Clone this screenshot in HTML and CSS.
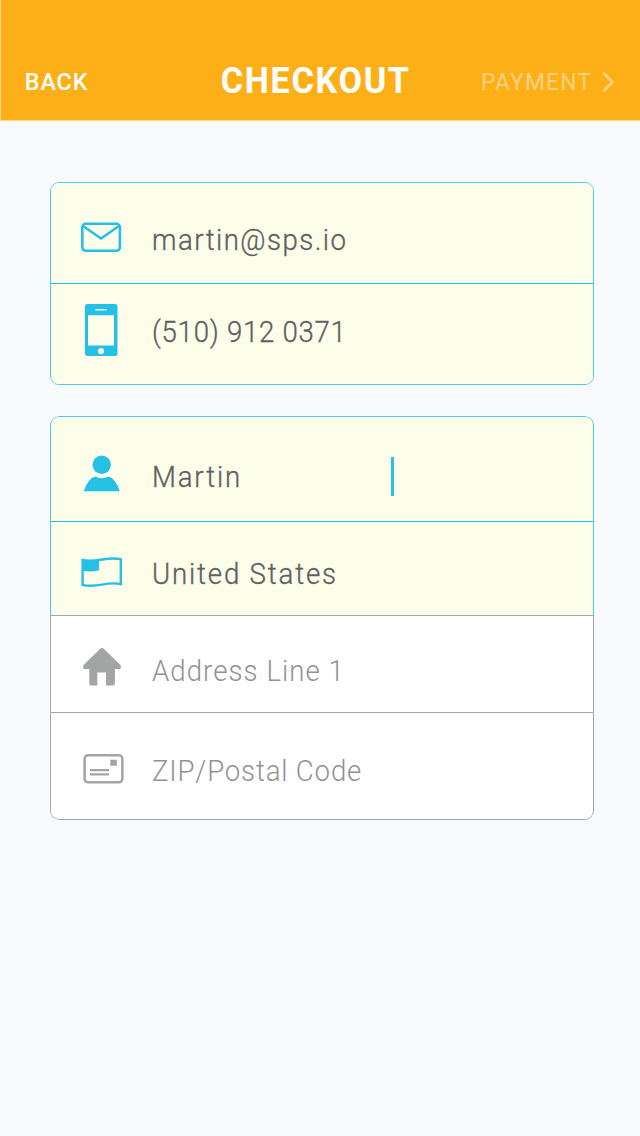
FILE: index.html
```html
<!DOCTYPE html>
<html lang="en">
<head>
<meta charset="utf-8">
<title>Checkout</title>
<link rel="stylesheet" href="styles.css">
</head>
<body>
<header class="bar">
  <a class="back">BACK</a>
  <h1 class="title">CHECKOUT</h1>
  <a class="next"><span class="next-label">PAYMENT</span>
    <svg class="chevron" width="14" height="22" viewBox="0 0 14 22"><path d="M2 2.5 10.500 11 2 19.500" fill="none" stroke="currentColor" stroke-width="2.6" stroke-linecap="round" stroke-linejoin="round"/></svg>
  </a>
</header>
<main class="form">
  <section class="card contact">
    <div class="row filled email">
      <svg class="icon" width="44" height="54" viewBox="0 0 44 54"><g fill="none" stroke="currentColor" stroke-width="2.6" stroke-linejoin="round"><rect x="2.300" y="13.800" width="37.600" height="27" rx="3.500"/><path d="M3 16 21 28.500 39 16"/></g></svg>
      <span class="value">martin@sps.io</span>
    </div>
    <div class="row filled phone">
      <svg class="icon" width="44" height="54" viewBox="0 0 44 54"><path fill="currentColor" fill-rule="evenodd" d="M7.500 1h27.500a2.500 2.500 0 0 1 2.500 2.500v47a2.500 2.500 0 0 1-2.500 2.500H7.500a2.500 2.500 0 0 1-2.500-2.500v-47A2.500 2.500 0 0 1 7.500 1zM8 12.300v30.200h26V12.300zM15.500 6v1.400h11V6zM21 45a3.100 3.100 0 1 0 .01 0z"/></svg>
      <span class="value">(510) 912 0371</span>
    </div>
  </section>
  <section class="card address">
    <div class="row filled name">
      <svg class="icon" width="44" height="54" viewBox="0 0 44 54"><g fill="currentColor"><circle cx="21.700" cy="17.800" r="9.200"/><path d="M15 29.500Q21.700 33 28.500 29.500Q36 32 39.800 44.300H3.800Q7.500 32 15 29.500z"/></g></svg>
      <span class="value">Martin</span>
      <span class="caret"></span>
    </div>
    <div class="row filled country">
      <svg class="icon" width="44" height="54" viewBox="0 0 44 54"><path d="M2.600 15C15 18.500 26 11 40.800 14.200V39C27 36 16 43.500 2.600 39.800z" fill="none" stroke="currentColor" stroke-width="2.400"/><path d="M2 14.500C8 16.500 13 15.500 19 14.300V24Q19 25.500 17.500 25.700C12 26.800 7 26.500 2 25.500z" fill="currentColor"/></svg>
      <span class="value">United States</span>
    </div>
    <div class="row empty line1">
      <svg class="icon" width="44" height="54" viewBox="0 0 44 54"><path fill="currentColor" d="M20.500 8.500Q22 7.500 23.500 8.500L40 24.500Q42 27 40 29H34.900V43.500Q34.900 45.500 33 45.500H26V32.500H17.300V45.500H11.200Q9.300 45.500 9.300 43.500V29H4.200Q2 27 4 24.500z"/></svg>
      <span class="value">Address Line 1</span>
    </div>
    <div class="row empty zip">
      <svg class="icon" width="46" height="54" viewBox="0 0 46 54"><rect x="4.600" y="13.300" width="37.800" height="27" rx="3.500" fill="none" stroke="currentColor" stroke-width="2.500"/><path fill="currentColor" d="M30.300 17.700h6.500v6h-6.500zM10 27h19v2.300H10zM10 31.200h19v2.400H10z"/></svg>
      <span class="value">ZIP/Postal Code</span>
    </div>
  </section>
</main>
</body>
</html>
```
FILE: styles.css
```css
* { box-sizing: border-box; }
body { margin: 0; min-height: 1136px; background: #f9fafc; font-family: Roboto, "Liberation Sans", sans-serif; }
.bar { display: grid; grid-template-columns: 196px 1fr 159px; height: 121px; background: #fdaf17; border-left: 1px solid #fed68b; border-bottom: 1px solid #fed68b; color: #fff; }
.back, .next-label, .title, .value { transform-origin: left center; }
.back, .next-label { font-size: 24.500px; line-height: 30px; font-weight: 500; }
.back { padding: 67px 0 0 25px; letter-spacing: 1px; transform: scaleX(0.95); }
.title { margin: 0; padding: 61px 0 0 25px; font-size: 36px; line-height: 40px; font-weight: 700; letter-spacing: 1.750px; white-space: nowrap; transform: scaleX(0.95); }
.next { display: flex; align-items: flex-start; padding-top: 67px; color: #fed184; }
.next-label { width: 121px; flex: none; font-weight: 400; letter-spacing: 1.300px; transform: scaleX(0.93); }
.chevron { margin-top: 4px; flex: none; }
.form { display: flex; flex-direction: column; gap: 31px; padding: 61px 46px 0 50px; }
.card { border: 1px solid #48cce8; border-radius: 9px; overflow: hidden; }
.address { border: 0; }
.row { display: flex; align-items: flex-start; padding-left: 29px; }
.address .row { border-left: 1px solid #48cce8; border-right: 1px solid #48cce8; }
.filled { background: #fdfeea; color: #24c0e6; }
.empty { background: #fff; color: #a3a5a4; }
.icon { flex: none; display: block; }
.value { margin-left: 28px; width: 239px; flex: none; font-size: 30px; line-height: 30px; font-weight: 300; -webkit-text-stroke: 0.35px #5f6062; white-space: nowrap; color: #5f6062; transform: scaleX(0.92); }
.empty .value { color: #929292; -webkit-text-stroke: 0; }
.email { height: 101px; border-bottom: 1px solid #24c0e6; padding-top: 27px; }
.email .value { margin-top: 15px; letter-spacing: 1.600px; }
.phone { height: 100px; padding-top: 19px; }
.phone .value { margin-top: 14px; letter-spacing: 0.800px; }
.address .name { height: 106px; border-top: 1px solid #48cce8; border-bottom: 1px solid #24c0e6; border-radius: 9px 9px 0 0; padding-top: 30px; }
.name .value { margin-top: 15px; letter-spacing: 2px; }
.caret { width: 3px; height: 39px; margin-top: 10px; background: #24c0e6; }
.country { height: 93px; padding-top: 23px; }
.country .value { margin-top: 14px; letter-spacing: 2px; }
.address .empty { border-color: #a3a5a6; border-top: 1px solid #a3a5a6; }
.line1 { height: 97px; padding-top: 24px; }
.line1 .value { margin-top: 16px; letter-spacing: 1.150px; }
.address .zip { height: 108px; border-bottom: 1px solid #a3a5a6; border-radius: 0 0 9px 9px; padding-top: 29px; }
.zip .value { margin-left: 26px; margin-top: 14px; letter-spacing: 0.900px; }
```
